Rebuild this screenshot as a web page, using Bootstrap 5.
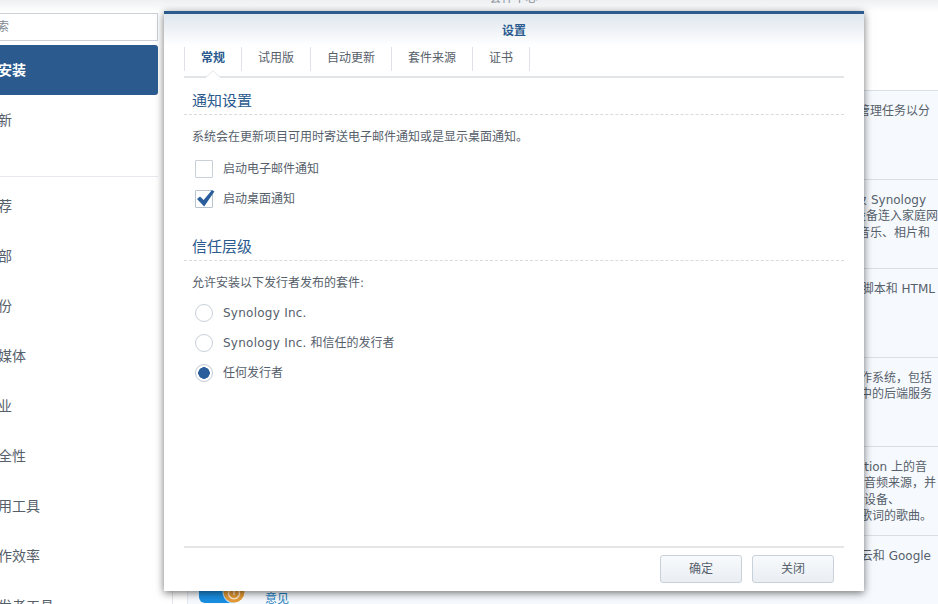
<!DOCTYPE html>
<html lang="zh-CN">
<head>
<meta charset="utf-8">
<title>套件中心</title>
<link href="https://cdn.jsdelivr.net/npm/bootstrap@5.3.0/dist/css/bootstrap.min.css" rel="stylesheet">
<style>
html,body{height:100%;}
body{width:938px;height:604px;overflow:hidden;position:relative;background:#fff;color:#56606b;font:12px/16.5px "DejaVu Sans","Noto Sans CJK SC",sans-serif;}
.app-head{height:12px;padding-left:89px;overflow:hidden;background:linear-gradient(#eef0f3,#fff);color:#8a9199;}
.app-head div{margin-top:-10px;}
.app-body{height:592px;}
.side{width:213px;margin-left:-40px;flex:none;padding:1px 14px 0 0;background:#fff;border-right:1px solid #e3e6ea;overflow:hidden;}
.side .form-control{height:28px;margin-left:24px;width:174px;padding:0;border:1px solid #ccd2d9;border-radius:0;font-size:12px;color:#7a848e;box-shadow:none;}
.side .form-control::placeholder{color:#7f8891;opacity:1;}
.side-list{margin-top:4px;}
.side-list .list-group-item{height:50px;line-height:50px;padding:0 0 0 24px;margin:0;border:0;border-radius:0;background:transparent;color:#56606b;font-size:14px;white-space:nowrap;}
.side-list .list-group-item.active{background:#2a5a8e;color:#fff;font-weight:700;border-radius:3px;}
.side-rule{height:1px;margin:31px 0 4px;background:#e6e9ed;}
.main-col{margin-left:14px;flex:1;min-width:0;border-left:1px solid #e3e9f0;overflow:hidden;}
.main-top{height:78px;background:#fff;}
.pkg-row{height:89px;padding-top:12px;border-top:1px solid #d9dfe6;background:#f6fafe;}
.pkg-line{text-align:right;white-space:nowrap;height:16.3px;}
.e0{padding-right:0}.e2{padding-right:2px}.e3{padding-right:3px}.e6{padding-right:6px}.e7{padding-right:7px}.e8{padding-right:8px}.e11{padding-right:11px}.e12{padding-right:12px}.e38{padding-right:38px}
.pkg-last{height:80px;position:relative;}
.pkg-icon{position:absolute;left:11px;top:44px;}
.pkg-link{position:absolute;left:77px;top:55px;font-size:12px;color:#1b7fc4;text-decoration:none;line-height:16px;}
.dlg{position:absolute;left:164px;top:11px;width:700px;height:580px;background:#fff;border-top:3px solid #2a5a8e;box-shadow:0 2px 8px rgba(0,0,0,.55);padding:0 20px;display:flex;flex-direction:column;}
.dlg-bg{position:absolute;left:0;right:0;top:0;height:32px;background:linear-gradient(#dfe6ee,#fff);}
.dlg-title{position:relative;height:33px;line-height:35px;margin:0;text-align:center;font-size:12px;font-weight:700;color:#2a5a8e;font-family:inherit;}
.dlg-tabs{position:relative;height:31px;flex:none;border-bottom:2px solid #e2e5e8;flex-wrap:nowrap;}
.dlg-tabs .nav-item{height:24px;border-right:1px solid #dfe3e7;}
.dlg-tabs .nav-item:first-child{border-left:1px solid #dfe3e7;}
.dlg-tabs .nav-link{padding:0 16px;line-height:23px;font-size:12px;color:#56606b;}
.dlg-tabs .nav-link.active{color:#2a5a8e;font-weight:700;}
.tab-notch{position:absolute;left:22px;bottom:-2px;width:14px;height:8px;}
.sec-title{margin:0;padding-left:8px;height:26px;line-height:24px;font-size:15px;font-weight:400;color:#2a5a8e;border-bottom:1px dashed #d7dbe0;font-family:inherit;}
.sec-a{margin-top:11px;}
.sec-b{margin-top:27px;}
.sec-text{padding-left:8px;height:17px;line-height:17px;}
.sec-text-a{margin:14px 0 2px;}
.sec-text-b{margin:14px 0 0;}
.opt{position:relative;display:flex;align-items:center;gap:10px;height:18px;min-height:18px;padding:0;margin:12px 0 0 11px;}
.opt .form-check-input{width:18px;height:18px;margin:0;float:none;flex:none;background-color:#fff;background-image:none;border:1px solid #c9d0d8;box-shadow:none;}
.opt .form-check-input[type=checkbox]{border-radius:1px;}
.opt .form-check-input[type=radio]:checked{border-color:#c1cad4;background-color:#fff;background-image:radial-gradient(circle at center,#2a5f9c 0 5.5px,#fff 6px);}
.opt .form-check-input[type=checkbox]:checked{background-color:#fff;border-color:#b9c4cf;}
.opt .form-check-label{color:#56606b;}
.opt-tick{position:absolute;left:1px;top:-1px;pointer-events:none;}
.lat{letter-spacing:.25px;}
.dlg-foot{margin-top:auto;height:45px;flex:none;border-top:2px solid #e4e6e8;padding:7px 10px 0 0;gap:10px;}
.dlg-foot .btn{width:82px;height:28px;padding:0;font-size:12px;line-height:26px;color:#56606b;border:1px solid #c8d0d9;border-radius:3px;background:linear-gradient(#f8fafc,#e9eef3);}
</style>
</head>
<body>
<header class="app-head text-center"><div>套件中心</div></header>
<div class="app-body d-flex">
  <aside class="side">
    <input class="form-control" type="text" placeholder="搜索" aria-label="搜索">
    <div class="list-group side-list">
      <a class="list-group-item active">已安装</a>
      <a class="list-group-item">更新</a>
      <div class="side-rule"></div>
      <a class="list-group-item">推荐</a>
      <a class="list-group-item">全部</a>
      <a class="list-group-item">备份</a>
      <a class="list-group-item">多媒体</a>
      <a class="list-group-item">商业</a>
      <a class="list-group-item">安全性</a>
      <a class="list-group-item">实用工具</a>
      <a class="list-group-item">工作效率</a>
      <a class="list-group-item">开发者工具</a>
    </div>
  </aside>
  <main class="main-col">
    <div class="main-top"></div>
    <div class="pkg-row"><div class="pkg-line e8">管理任务以分</div></div>
    <div class="pkg-row">
      <div class="pkg-line e12">及 Synology</div>
      <div class="pkg-line e0">设备连入家庭网</div>
      <div class="pkg-line e8">音乐、相片和</div>
    </div>
    <div class="pkg-row"><div class="pkg-line e3">脚本和 HTML</div></div>
    <div class="pkg-row">
      <div class="pkg-line e6">操作系统，包括</div>
      <div class="pkg-line e6">中的后端服务</div>
    </div>
    <div class="pkg-row">
      <div class="pkg-line e11">Station 上的音</div>
      <div class="pkg-line e2">音频来源，并</div>
      <div class="pkg-line e38">设备、</div>
      <div class="pkg-line e6">歌词的歌曲。</div>
    </div>
    <div class="pkg-row pkg-last">
      <div class="pkg-line e7">云和 Google</div>
      <svg class="pkg-icon" width="48" height="24" viewBox="0 0 48 24" aria-hidden="true">
        <rect x="0" y="0" width="40" height="23" rx="6" fill="#1a8ee0"/>
        <circle cx="35" cy="12" r="11.5" fill="#fff" fill-opacity=".7"/>
        <circle cx="35" cy="12" r="10.5" fill="#e79a35"/>
        <path d="M30 11a5.5 5.5 0 1 0 10 0" fill="none" stroke="#fbe6c6" stroke-width="1.5"/>
        <path d="M35 9v6" stroke="#fbe6c6" stroke-width="1.5"/>
      </svg>
      <a class="pkg-link" href="#">意见</a>
    </div>
  </main>
</div>

<section class="dlg" role="dialog" aria-label="设置">
  <div class="dlg-bg"></div>
  <h5 class="dlg-title">设置</h5>
  <ul class="nav dlg-tabs">
    <li class="nav-item"><a class="nav-link active" href="#">常规</a></li>
    <li class="nav-item"><a class="nav-link" href="#">试用版</a></li>
    <li class="nav-item"><a class="nav-link" href="#">自动更新</a></li>
    <li class="nav-item"><a class="nav-link" href="#">套件来源</a></li>
    <li class="nav-item"><a class="nav-link" href="#">证书</a></li>
    <svg class="tab-notch" viewBox="0 0 14 8" aria-hidden="true"><path d="M0 7 L7 0 L14 7 V8 H0 Z" fill="#fff"/><path d="M0 6.5 H1 L7 .7 L13 6.5 H14" fill="none" stroke="#e2e5e8"/></svg>
  </ul>
  <h6 class="sec-title sec-a">通知设置</h6>
  <p class="sec-text sec-text-a">系统会在更新项目可用时寄送电子邮件通知或是显示桌面通知。</p>
  <div class="form-check opt">
    <input class="form-check-input" type="checkbox" id="c1">
    <label class="form-check-label" for="c1">启动电子邮件通知</label>
  </div>
  <div class="form-check opt">
    <input class="form-check-input" type="checkbox" id="c2" checked>
    <svg class="opt-tick" width="19" height="19" viewBox="0 0 19 19" aria-hidden="true"><path d="M1 10 L4 7.6 L7.6 11 L16 1 L18.4 2.6 L8.2 17.4 Z" fill="#2a5f9c"/></svg>
    <label class="form-check-label" for="c2">启动桌面通知</label>
  </div>
  <h6 class="sec-title sec-b">信任层级</h6>
  <p class="sec-text sec-text-b">允许安装以下发行者发布的套件:</p>
  <div class="form-check opt">
    <input class="form-check-input" type="radio" name="r" id="r1">
    <label class="form-check-label lat" for="r1">Synology Inc.</label>
  </div>
  <div class="form-check opt">
    <input class="form-check-input" type="radio" name="r" id="r2">
    <label class="form-check-label" for="r2"><span class="lat">Synology Inc.</span> 和信任的发行者</label>
  </div>
  <div class="form-check opt">
    <input class="form-check-input" type="radio" name="r" id="r3" checked>
    <label class="form-check-label" for="r3">任何发行者</label>
  </div>
  <footer class="dlg-foot d-flex justify-content-end">
    <button class="btn" type="button">确定</button>
    <button class="btn" type="button">关闭</button>
  </footer>
</section>
<script src="https://cdn.jsdelivr.net/npm/bootstrap@5.3.0/dist/js/bootstrap.bundle.min.js"></script>
</body>
</html>
